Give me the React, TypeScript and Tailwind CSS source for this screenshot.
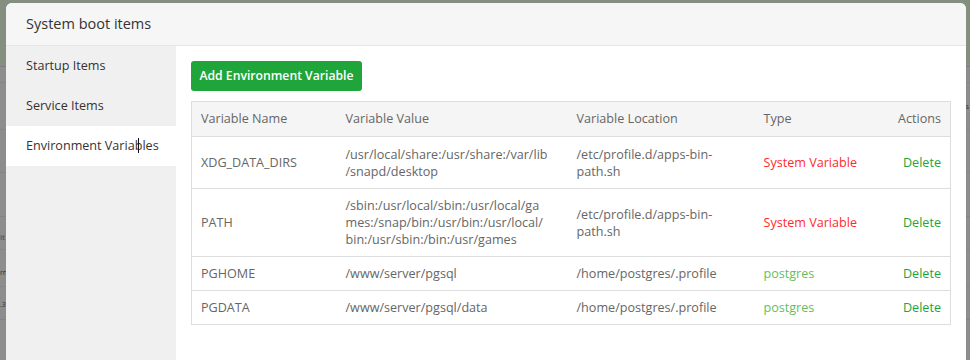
import React from "react";

const font = { fontFamily: '"Open Sans", "Noto Sans", sans-serif' };

type Row = {
  name: string;
  value: string[];
  location: string[];
  type: string;
  system: boolean;
  h: string;
};

const rows: Row[] = [
  {
    name: "XDG_DATA_DIRS",
    value: ["/usr/local/share:/usr/share:/var/lib", "/snapd/desktop"],
    location: ["/etc/profile.d/apps-bin-", "path.sh"],
    type: "System Variable",
    system: true,
    h: "h-[52px]",
  },
  {
    name: "PATH",
    value: [
      "/sbin:/usr/local/sbin:/usr/local/ga",
      "mes:/snap/bin:/usr/bin:/usr/local/",
      "bin:/usr/sbin:/bin:/usr/games",
    ],
    location: ["/etc/profile.d/apps-bin-", "path.sh"],
    type: "System Variable",
    system: true,
    h: "h-[68px]",
  },
  {
    name: "PGHOME",
    value: ["/www/server/pgsql"],
    location: ["/home/postgres/.profile"],
    type: "postgres",
    system: false,
    h: "h-[34px]",
  },
  {
    name: "PGDATA",
    value: ["/www/server/pgsql/data"],
    location: ["/home/postgres/.profile"],
    type: "postgres",
    system: false,
    h: "h-[34px]",
  },
];

function Lines({ lines }: { lines: string[] }) {
  return (
    <>
      {lines.map((l, i) => (
        <React.Fragment key={i}>
          {i > 0 && <br />}
          {l}
        </React.Fragment>
      ))}
    </>
  );
}

export default function App() {
  return (
    <div
      className="relative w-[970px] h-[360px] overflow-hidden bg-[#8d8d8d]"
      style={font}
    >
      {/* underlying page behind mask */}
      <div className="flex flex-col">
        <div className="h-[67px] bg-[#848f7f] border-b border-[#7e7e7e]" />
        <div className="h-[16px] border-b border-[#858585]" />
        <div className="h-[47px] border-b border-[#858585] flex items-center justify-end pr-[1px]">
          <span className="text-[8px] text-[#3a3a3a]">s</span>
        </div>
        <div className="h-[43px] border-b border-[#858585]" />
        <div className="h-[44px] border-b border-[#858585]" />
        <div className="h-[33px] border-b border-[#858585]" />
        <div className="h-[37px] border-b border-[#858585]" />
        <div className="h-[33px] border-b border-[#858585]" />
      </div>
      <div className="absolute left-0 top-[232px] text-[8px] leading-[10px] text-[#2d4a66]">it</div>
      <div className="absolute left-0 top-[268px] text-[7px] leading-[10px] text-[#333]">rn</div>
      <div className="absolute left-0 top-[300px] text-[7px] leading-[10px] text-[#333]">.3</div>

      {/* modal */}
      <div className="absolute left-[6px] top-[3px] w-[960px] h-[420px] rounded-[6px] bg-white overflow-hidden flex flex-col">
        <div className="h-[43px] shrink-0 bg-[#f6f6f6] border-b border-[#e6e6e6] flex items-center px-[20px] text-[14.5px] text-[#333]">
          System boot items
        </div>
        <div className="flex flex-1">
          <div className="w-[170px] shrink-0 bg-[#f0f0f0] flex flex-col text-[12.6px] text-[#333]">
            <div className="h-[40px] flex items-center pl-[20px]">Startup Items</div>
            <div className="h-[40px] flex items-center pl-[20px]">Service Items</div>
            <div className="relative h-[40px] flex items-center pl-[20px] bg-white">
              Environment Variables
              <div className="absolute left-[132px] top-[12px] w-[1px] h-[15px] bg-[#111]" />
            </div>
          </div>
          <div className="flex-1 p-[15px]">
            <button className="h-[30px] w-[171px] rounded-[3px] bg-[#20a53a] text-white text-[12.2px] font-semibold whitespace-nowrap">
              Add Environment Variable
            </button>
            <table className="mt-[10px] w-[760px] table-fixed border-collapse border border-[#ddd] text-[12.6px] text-[#666]">
              <colgroup>
                <col className="w-[145px]" />
                <col className="w-[231px]" />
                <col className="w-[187px]" />
                <col className="w-[120px]" />
                <col />
              </colgroup>
              <thead>
                <tr className="bg-[#f5f5f5] h-[35px]">
                  <th className="font-normal text-left px-[9px] border-b border-[#ddd]">Variable Name</th>
                  <th className="font-normal text-left px-[9px] border-b border-[#ddd]">Variable Value</th>
                  <th className="font-normal text-left px-[9px] border-b border-[#ddd]">Variable Location</th>
                  <th className="font-normal text-left px-[9px] border-b border-[#ddd]">Type</th>
                  <th className="font-normal text-right px-[9px] border-b border-[#ddd]">Actions</th>
                </tr>
              </thead>
              <tbody>
                {rows.map((r) => (
                  <tr key={r.name} className={`border-b border-[#ddd] leading-[17px] ${r.h}`}>
                    <td className="px-[9px] py-0 align-middle">{r.name}</td>
                    <td className="px-[9px] py-0 align-middle whitespace-nowrap">
                      <Lines lines={r.value} />
                    </td>
                    <td className="px-[9px] py-0 align-middle whitespace-nowrap">
                      <Lines lines={r.location} />
                    </td>
                    <td
                      className={
                        r.system
                          ? "px-[9px] py-0 align-middle text-[#ff2b2b]"
                          : "px-[9px] py-0 align-middle text-[#5fbf5f]"
                      }
                    >
                      {r.type}
                    </td>
                    <td className="px-[9px] py-0 align-middle text-right text-[#20a53a]">Delete</td>
                  </tr>
                ))}
              </tbody>
            </table>
          </div>
        </div>
      </div>
    </div>
  );
}
